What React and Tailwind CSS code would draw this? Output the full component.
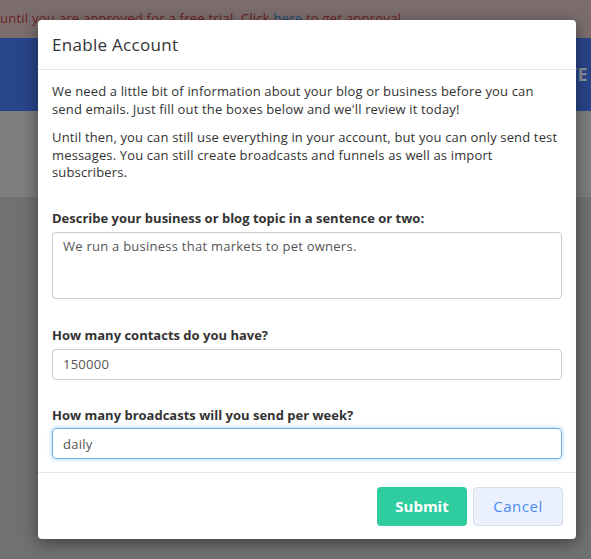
export default function App() {
  const font = { fontFamily: '"Open Sans", "Noto Sans", sans-serif' };
  return (
    <div className="relative h-[559px] w-[591px] overflow-hidden bg-[#707172]" style={font}>
      {/* page behind the overlay */}
      <div className="flex h-[38px] items-center bg-[#7b6d6d] text-[13px] tracking-[0.25px] text-[#6b1f23]">
        <span className="whitespace-nowrap">
          until you are approved for a free trial. Click <span className="text-[#1f4a70]">here</span> to get approval.
        </span>
      </div>
      <div className="flex h-[73px] items-center justify-end bg-[#29458a] pr-[3px]">
        <span className="text-[18px] font-bold tracking-wide text-[#8a8f99]">TE</span>
      </div>
      <div className="h-[86px] bg-[#7e7e7e]" />

      {/* modal */}
      <div className="absolute left-[38px] top-[20px] w-[538px] rounded-[4px] bg-white shadow-[0_4px_16px_rgba(0,0,0,0.45)]">
        <div className="flex h-[50px] items-center border-b border-[#e4e4e4] px-[14px]">
          <h2 className="text-[17px] tracking-[0.3px] text-[#333]">Enable Account</h2>
        </div>
        <div className="px-[14px] pt-[13px] text-[13px] leading-[17.5px] text-[#333]">
          <p className="tracking-[0.15px]">
            We need a little bit of information about your blog or business before you can send emails. Just fill out
            the boxes below and we'll review it today!
          </p>
          <p className="mt-[11px] tracking-[0.15px]">
            Until then, you can still use everything in your account, but you can only send test messages. You can still
            create broadcasts and funnels as well as import subscribers.
          </p>

          <label className="mt-[28px] block text-[13px] font-bold">Describe your business or blog topic in a sentence or two:</label>
          <textarea
            className="mt-[5px] block h-[67px] w-full resize-none rounded-[4px] border border-[#cccccc] px-[10px] py-[5px] text-[13px] tracking-[0.25px] text-[#555] outline-none"
            defaultValue="We run a business that markets to pet owners."
          />

          <label className="mt-[28px] block font-bold">How many contacts do you have?</label>
          <input
            className="mt-[4px] block h-[31px] w-full rounded-[4px] border border-[#cccccc] px-[10px] text-[13px] tracking-[0.25px] text-[#555] outline-none"
            defaultValue="150000"
          />

          <label className="mt-[27px] block font-bold">How many broadcasts will you send per week?</label>
          <input
            className="mt-[4px] block h-[31px] w-full rounded-[4px] border border-[#66afe9] px-[10px] text-[13px] tracking-[0.25px] text-[#555] shadow-[0_0_5px_rgba(102,175,233,0.6)] outline-none"
            defaultValue="daily"
          />
        </div>
        <div className="mt-[13px] flex justify-end gap-[6px] border-t border-[#e5e5e5] px-[13px] pb-[13px] pt-[14px]">
          <button className="h-[39px] w-[90px] rounded-[4px] bg-[#2fcc9f] text-[15px] font-bold text-white">Submit</button>
          <button className="h-[39px] w-[90px] rounded-[4px] border border-[#d6dee9] bg-[#eaf1fc] text-[15px] tracking-[0.5px] text-[#4c8bf5]">
            Cancel
          </button>
        </div>
      </div>
    </div>
  );
}
